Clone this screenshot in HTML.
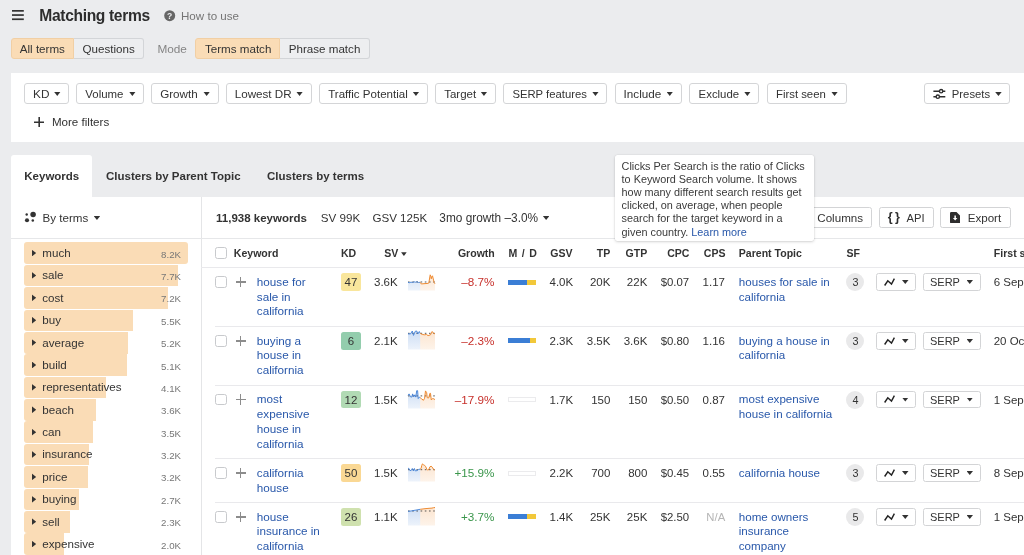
<!DOCTYPE html>
<html lang="en">
<head>
<meta charset="utf-8">
<title>Matching terms</title>
<style>
*{box-sizing:border-box;margin:0;padding:0}
html,body{width:1024px;height:555px;overflow:hidden}
body{background:#ebecee;font-family:"Liberation Sans",Arial,sans-serif;font-size:11.25px;color:#333;position:relative}
.a{position:absolute;white-space:nowrap}
.t{position:absolute;white-space:nowrap;line-height:14px;height:14px}
.b{font-weight:bold}
.tg{position:absolute;top:38.3px;height:21px;border:1px solid #d3d5d8;background:#edeef0}
.tg.on{background:#fadcb6;border-color:#f1cfa4}
.panel{position:absolute;background:#fff}
.fb{position:absolute;top:82.9px;height:21px;border:1px solid #d4d5d7;border-radius:3px;background:#fff}
.car{position:absolute;background:#333;clip-path:polygon(0 0,100% 0,50% 100%)}
.term{position:absolute;left:24px;height:21.6px;width:170px}
.term .bar{position:absolute;left:0;top:0;height:21.6px;background:#fadcb6;border-radius:3px 0 0 3px}
.term .tri{position:absolute;left:7.8px;top:7.3px;width:4.4px;height:6.8px;background:#333;clip-path:polygon(0 0,100% 50%,0 100%)}
.term .nm{position:absolute;left:18.3px;top:3.6px;line-height:14px;font-size:11.6px;color:#333}
.term .ct{position:absolute;right:13px;top:5.3px;line-height:14px;font-size:9.7px;color:#777}
.th{position:absolute;top:246px;font-weight:bold;font-size:10.5px;line-height:14px;color:#333;white-space:nowrap}
.lnk{color:#2958aa}
.kw{position:absolute;left:256.8px;line-height:14.87px;color:#2958aa;white-space:nowrap}
.cb{position:absolute;left:215.3px;width:11.5px;height:11.5px;border:1px solid #c8cacd;border-radius:2.5px;background:#fff}
.plus{position:absolute;width:10.4px;height:10.4px}
.plus:before{content:"";position:absolute;left:0;top:4.5px;width:10.4px;height:1.4px;background:#8c8c8c}
.plus:after{content:"";position:absolute;left:4.5px;top:0;width:1.4px;height:10.4px;background:#8c8c8c}
.kd{position:absolute;left:341px;width:19.8px;height:17.7px;line-height:19.3px;border-radius:2.5px;text-align:center;color:#333}
.sf{position:absolute;left:846.4px;width:18px;height:18px;line-height:18px;border-radius:9px;background:#e9e9ea;text-align:center;font-size:10.8px;color:#333}
.btn{position:absolute;border:1px solid #d3d4d6;border-radius:2.5px;background:#fff}
.rl{position:absolute;left:215.3px;width:810px;height:1px;background:#e9e9ec}
.red{color:#c7302b}.grn{color:#3a964b}
.md{position:absolute;left:508.2px;width:27.8px;height:5px}
</style>
</head>
<body>
<div id="app" style="position:absolute;left:0;top:0;width:1024px;height:555px;overflow:hidden;will-change:transform">
<svg class="a" style="left:12.1px;top:10.45px" width="12" height="11" viewBox="0 0 12 11"><rect x="0" y="0" width="11.8" height="1.7" fill="#333"/><rect x="0" y="4.2" width="11.8" height="1.7" fill="#333"/><rect x="0" y="8.4" width="11.8" height="1.7" fill="#333"/></svg>
<div class="t b" style="top:8.6px;font-size:15.6px;left:39.3px;color:#2d2d2d;letter-spacing:-0.34px;">Matching terms</div>
<svg class="a" style="left:163.8px;top:10.2px" width="12" height="12" viewBox="0 0 12 12"><circle cx="5.7" cy="5.7" r="5.5" fill="#666"/><text x="5.7" y="8.8" font-family="Liberation Sans, sans-serif" font-size="8.6" font-weight="bold" fill="#ebecee" text-anchor="middle">?</text></svg>
<div class="t " style="top:9.0px;font-size:11.6px;left:181.0px;color:#757575;">How to use</div>
<div class="tg on" style="left:11px;width:63px;border-radius:3px 0 0 3px"></div>
<div class="tg" style="left:73.5px;width:70.3px;border-radius:0 3px 3px 0;border-left:0"></div>
<div class="t " style="top:42.0px;font-size:11.6px;left:19.8px;">All terms</div>
<div class="t " style="top:42.0px;font-size:11.6px;left:82.5px;">Questions</div>
<div class="t " style="top:42.0px;font-size:11.8px;left:157.4px;color:#858585;">Mode</div>
<div class="tg on" style="left:195.4px;width:84.6px;border-radius:3px 0 0 3px"></div>
<div class="tg" style="left:279.8px;width:89.8px;border-radius:0 3px 3px 0;border-left:0"></div>
<div class="t " style="top:42.0px;font-size:11.6px;left:205.0px;">Terms match</div>
<div class="t " style="top:42.0px;font-size:11.6px;left:288.8px;">Phrase match</div>
<div class="panel" style="left:11px;top:72.5px;width:1013px;height:69.5px"></div>
<div class="fb" style="left:24.2px;width:45.1px"></div>
<div class="t " style="top:86.6px;font-size:11.8px;left:33.1px;">KD</div>
<i class="car" style="left:54.0px;top:91.8px;width:6.5px;height:4.1px"></i>
<div class="fb" style="left:76.2px;width:68.2px"></div>
<div class="t " style="top:86.6px;font-size:11.45px;left:85.3px;">Volume</div>
<i class="car" style="left:129.1px;top:91.8px;width:6.5px;height:4.1px"></i>
<div class="fb" style="left:151.1px;width:67.6px"></div>
<div class="t " style="top:86.6px;font-size:11.65px;left:160.2px;">Growth</div>
<i class="car" style="left:203.4px;top:91.8px;width:6.5px;height:4.1px"></i>
<div class="fb" style="left:226px;width:85.6px"></div>
<div class="t " style="top:86.6px;font-size:11.65px;left:234.7px;">Lowest DR</div>
<i class="car" style="left:296.3px;top:91.8px;width:6.5px;height:4.1px"></i>
<div class="fb" style="left:319px;width:109.0px"></div>
<div class="t " style="top:86.6px;font-size:11.55px;left:328.2px;">Traffic Potential</div>
<i class="car" style="left:412.7px;top:91.8px;width:6.5px;height:4.1px"></i>
<div class="fb" style="left:435.4px;width:60.6px"></div>
<div class="t " style="top:86.6px;font-size:11.5px;left:444.2px;">Target</div>
<i class="car" style="left:480.7px;top:91.8px;width:6.5px;height:4.1px"></i>
<div class="fb" style="left:503.1px;width:104.4px"></div>
<div class="t " style="top:86.6px;font-size:11.3px;left:512.4px;">SERP features</div>
<i class="car" style="left:592.2px;top:91.8px;width:6.5px;height:4.1px"></i>
<div class="fb" style="left:614.5px;width:67.3px"></div>
<div class="t " style="top:86.6px;font-size:11.7px;left:623.6px;">Include</div>
<i class="car" style="left:666.5px;top:91.8px;width:6.5px;height:4.1px"></i>
<div class="fb" style="left:688.8px;width:70.6px"></div>
<div class="t " style="top:86.6px;font-size:11.4px;left:698.6px;">Exclude</div>
<i class="car" style="left:744.1px;top:91.8px;width:6.5px;height:4.1px"></i>
<div class="fb" style="left:766.7px;width:79.9px"></div>
<div class="t " style="top:86.6px;font-size:11.35px;left:776.0px;">First seen</div>
<i class="car" style="left:831.3px;top:91.8px;width:6.5px;height:4.1px"></i>
<div class="fb" style="left:924.2px;width:86.2px"></div>
<svg class="a" style="left:932.5px;top:87.5px" width="13" height="12" viewBox="0 0 13 12" fill="none" stroke="#2e2e2e" stroke-width="1.5"><path d="M0.4 3.2h11.9M0.4 8.7h11.9"/><circle cx="8.1" cy="3.2" r="1.65" fill="#fff" stroke-width="1.4"/><circle cx="4.8" cy="8.7" r="1.65" fill="#fff" stroke-width="1.4"/></svg>
<div class="t " style="top:86.6px;font-size:11.3px;left:951.8px;">Presets</div>
<i class="car" style="left:995.2px;top:92.0px;width:6.5px;height:4.1px"></i>
<svg class="a" style="left:33.6px;top:116.7px" width="10.4" height="10.4" viewBox="0 0 10.4 10.4"><path d="M5.200 0v10.4M0 5.200h10.4" stroke="#333" stroke-width="1.6" fill="none"/></svg>
<div class="t " style="top:114.8px;font-size:11.6px;left:51.9px;">More filters</div>
<div class="panel" style="left:11px;top:155.3px;width:81px;height:44px;border-radius:3px 3px 0 0"></div>
<div class="t b" style="top:169.3px;font-size:11.5px;left:24.3px;">Keywords</div>
<div class="t b" style="top:169.3px;font-size:11.5px;left:106.0px;">Clusters by Parent Topic</div>
<div class="t b" style="top:169.3px;font-size:11.5px;left:267.0px;">Clusters by terms</div>
<div class="panel" style="left:11px;top:196.7px;width:1013px;height:360px"></div>
<div class="a" style="left:201px;top:196.7px;width:1px;height:360px;background:#e4e5e7"></div>
<div class="a" style="left:11px;top:238px;width:1013px;height:1px;background:#e6e7e9"></div>
<svg class="a" style="left:24px;top:211px" width="13" height="13" viewBox="0 0 13 13" fill="#333"><circle cx="2.700" cy="3.500" r="1.2"/><circle cx="3" cy="9.2" r="2.050"/><circle cx="9.100" cy="3.400" r="2.750"/><circle cx="8.8" cy="9.5" r="1.25"/></svg>
<div class="t " style="top:210.7px;font-size:11.6px;left:42.6px;">By terms</div>
<i class="car" style="left:93.7px;top:215.9px;width:6.5px;height:4.1px"></i>
<div class="t b" style="top:210.5px;font-size:11.5px;left:216.1px;">11,938 keywords</div>
<div class="t " style="top:210.5px;font-size:11.6px;left:320.8px;">SV 99K</div>
<div class="t " style="top:210.5px;font-size:11.6px;left:372.4px;">GSV 125K</div>
<div class="t " style="top:210.5px;font-size:11.85px;left:439.3px;">3mo growth –3.0%</div>
<i class="car" style="left:542.9px;top:215.9px;width:6.5px;height:4.1px"></i>
<div class="btn" style="left:800px;top:207.2px;width:72.3px;height:20.8px"></div>
<div class="t " style="top:210.6px;font-size:11.6px;left:817.3px;">Columns</div>
<div class="btn" style="left:879.2px;top:207.2px;width:54.6px;height:20.8px"></div>
<div class="t b" style="top:209.9px;font-size:12.6px;left:887.8px;color:#2d2d2d;letter-spacing:2.2px;">{}</div>
<div class="t " style="top:210.6px;font-size:11.2px;left:906.5px;">API</div>
<div class="btn" style="left:940.4px;top:207.2px;width:70.3px;height:20.8px"></div>
<svg class="a" style="left:950.2px;top:211.6px" width="10.3" height="11.4" viewBox="0 0 10.3 11.4"><path d="M1.300 0h5.200L10.300 3.800v6.300a1.300 1.300 0 0 1-1.300 1.300H1.300A1.300 1.300 0 0 1 0 10.100V1.300A1.300 1.300 0 0 1 1.300 0z" fill="#2d2d2d"/><path d="M4.400 3.600h1.500v2.400h1.500L5.150 8.600L2.900 6h1.500z" fill="#fff"/></svg>
<div class="t " style="top:210.6px;font-size:11.6px;left:967.7px;">Export</div>
<div class="term" style="top:242.40px"><div class="bar" style="width:164px;border-radius:3px"></div><i class="tri"></i><span class="nm">much</span><span class="ct">8.2K</span></div>
<div class="term" style="top:264.78px"><div class="bar" style="width:154px"></div><i class="tri"></i><span class="nm">sale</span><span class="ct">7.7K</span></div>
<div class="term" style="top:287.16px"><div class="bar" style="width:144px"></div><i class="tri"></i><span class="nm">cost</span><span class="ct">7.2K</span></div>
<div class="term" style="top:309.54px"><div class="bar" style="width:109px"></div><i class="tri"></i><span class="nm">buy</span><span class="ct">5.5K</span></div>
<div class="term" style="top:331.92px"><div class="bar" style="width:104px"></div><i class="tri"></i><span class="nm">average</span><span class="ct">5.2K</span></div>
<div class="term" style="top:354.30px"><div class="bar" style="width:102.5px"></div><i class="tri"></i><span class="nm">build</span><span class="ct">5.1K</span></div>
<div class="term" style="top:376.68px"><div class="bar" style="width:82px"></div><i class="tri"></i><span class="nm">representatives</span><span class="ct">4.1K</span></div>
<div class="term" style="top:399.06px"><div class="bar" style="width:72px"></div><i class="tri"></i><span class="nm">beach</span><span class="ct">3.6K</span></div>
<div class="term" style="top:421.44px"><div class="bar" style="width:69px"></div><i class="tri"></i><span class="nm">can</span><span class="ct">3.5K</span></div>
<div class="term" style="top:443.82px"><div class="bar" style="width:64.5px"></div><i class="tri"></i><span class="nm">insurance</span><span class="ct">3.2K</span></div>
<div class="term" style="top:466.20px"><div class="bar" style="width:63.5px"></div><i class="tri"></i><span class="nm">price</span><span class="ct">3.2K</span></div>
<div class="term" style="top:488.58px"><div class="bar" style="width:54.5px"></div><i class="tri"></i><span class="nm">buying</span><span class="ct">2.7K</span></div>
<div class="term" style="top:510.96px"><div class="bar" style="width:46px"></div><i class="tri"></i><span class="nm">sell</span><span class="ct">2.3K</span></div>
<div class="term" style="top:533.34px"><div class="bar" style="width:39.5px"></div><i class="tri"></i><span class="nm">expensive</span><span class="ct">2.0K</span></div>
<div class="cb" style="top:247.3px"></div>
<div class="t b" style="top:246.2px;font-size:10.55px;left:233.8px;">Keyword</div>
<div class="t b" style="top:246.2px;font-size:10.55px;left:341.0px;">KD</div>
<div class="t b" style="top:246.2px;font-size:10.55px;left:384.3px;">SV</div>
<i class="car" style="left:401.1px;top:252.3px;width:5.6px;height:3.8px"></i>
<div class="t b" style="top:246.2px;font-size:10.55px;right:529.2px;">Growth</div>
<div class="t b" style="top:246.2px;font-size:10.55px;left:508.5px;word-spacing:1.6px;">M / D</div>
<div class="t b" style="top:246.2px;font-size:10.55px;right:451.5px;">GSV</div>
<div class="t b" style="top:246.2px;font-size:10.55px;right:413.7px;">TP</div>
<div class="t b" style="top:246.2px;font-size:10.55px;right:376.8px;">GTP</div>
<div class="t b" style="top:246.2px;font-size:10.55px;right:334.6px;">CPC</div>
<div class="t b" style="top:246.2px;font-size:10.55px;right:298.5px;">CPS</div>
<div class="t b" style="top:246.2px;font-size:10.55px;left:738.8px;">Parent Topic</div>
<div class="t b" style="top:246.2px;font-size:10.55px;left:846.5px;">SF</div>
<div class="t b" style="top:246.2px;font-size:10.55px;left:993.8px;">First seen</div>
<div class="a" style="left:201px;top:267px;width:823px;height:1px;background:#e9e9ec"></div>
<div class="cb" style="top:276.3px"></div>
<div class="plus" style="left:235.6px;top:276.9px"></div>
<div class="kw" style="top:274.7px;font-size:11.7px">house for<br>sale in<br>california</div>
<div class="kd" style="top:273.3px;background:#f9e69c;font-size:11.5px">47</div>
<div class="t " style="top:275.1px;font-size:11.5px;left:374.0px;">3.6K</div>
<svg class="a" style="left:408px;top:273.0px;overflow:visible" width="27" height="17.4" viewBox="0 0 27 17.4"><defs><linearGradient id="gb0" x1="0" y1="0" x2="0" y2="17.4" gradientUnits="userSpaceOnUse"><stop offset="0" stop-color="#4a86d8" stop-opacity="0.27"/><stop offset="1" stop-color="#4a86d8" stop-opacity="0.1"/></linearGradient><linearGradient id="go0" x1="0" y1="0" x2="0" y2="17.4" gradientUnits="userSpaceOnUse"><stop offset="0" stop-color="#f08a2c" stop-opacity="0.22"/><stop offset="1" stop-color="#f08a2c" stop-opacity="0.1"/></linearGradient></defs><polygon points="0.0,9.4 1.5,9.7 3.0,9.1 4.5,9.5 6.0,8.8 7.5,9.2 9.0,8.7 10.5,9.5 12.2,9.3 12.2,17.4 0,17.4" fill="url(#gb0)"/><polygon points="12.2,9.3 13.2,10.9 15.0,10.8 17.0,10.6 19.0,10.5 20.8,10.1 21.5,6.0 22.2,1.8 22.8,3.0 23.3,5.8 23.9,3.6 24.5,2.8 25.3,6.0 26.2,9.6 27.0,10.8 27.0,17.4 12.2,17.4" fill="url(#go0)"/><line x1="0" y1="9.0" x2="27" y2="9.0" stroke="#444" stroke-width="0.9" stroke-dasharray="1.6 2.6"/><polyline points="0.0,9.4 1.5,9.7 3.0,9.1 4.5,9.5 6.0,8.8 7.5,9.2 9.0,8.7 10.5,9.5 12.2,9.3" fill="none" stroke="#3f7fd6" stroke-width="0.9"/><polyline points="12.2,9.3 13.2,10.9 15.0,10.8 17.0,10.6 19.0,10.5 20.8,10.1 21.5,6.0 22.2,1.8 22.8,3.0 23.3,5.8 23.9,3.6 24.5,2.8 25.3,6.0 26.2,9.6 27.0,10.8" fill="none" stroke="#ee8a30" stroke-width="1"/></svg>
<div class="t red" style="top:275.1px;font-size:11.7px;right:529.6px;">–8.7%</div>
<div class="md" style="top:279.5px"><i class="a" style="left:0;top:0;width:19px;height:5px;background:#3b7ed5"></i><i class="a" style="left:19px;top:0;width:8.8px;height:5px;background:#f2c83a"></i></div>
<div class="t " style="top:275.1px;font-size:11.5px;right:450.8px;">4.0K</div>
<div class="t " style="top:275.1px;font-size:11.5px;right:413.6px;">20K</div>
<div class="t " style="top:275.1px;font-size:11.5px;right:376.7px;">22K</div>
<div class="t " style="top:275.1px;font-size:11.4px;right:334.8px;">$0.07</div>
<div class="t " style="top:275.1px;font-size:11.5px;right:299.0px;">1.17</div>
<div class="kw" style="left:738.8px;top:274.7px;font-size:11.6px">houses for sale in<br>california</div>
<div class="sf" style="top:273.1px">3</div>
<div class="btn" style="left:876.1px;top:273.3px;width:39.7px;height:17.7px"></div>
<svg class="a" style="left:883.8px;top:277.9px" width="11" height="8" viewBox="0 0 11 8"><path d="M0.650 7.500L3.800 2.800L7.500 6L10.400 0.600" fill="none" stroke="#222" stroke-width="1.45" stroke-linejoin="miter"/></svg>
<i class="car" style="left:902.0px;top:280.0px;width:6.5px;height:4.1px"></i>
<div class="btn" style="left:922.5px;top:273.3px;width:58.1px;height:17.7px"></div>
<div class="t " style="top:275.1px;font-size:11px;left:930.0px;">SERP</div>
<i class="car" style="left:966.5px;top:280.0px;width:6.5px;height:4.1px"></i>
<div class="t " style="top:275.1px;font-size:11.5px;left:993.7px;">6 Sep 2015</div>
<div class="rl" style="top:325.9px"></div>
<div class="cb" style="top:335.2px"></div>
<div class="plus" style="left:235.6px;top:335.8px"></div>
<div class="kw" style="top:333.6px;font-size:11.7px">buying a<br>house in<br>california</div>
<div class="kd" style="top:332.2px;background:#93cdad;font-size:11.5px">6</div>
<div class="t " style="top:334.0px;font-size:11.5px;left:374.0px;">2.1K</div>
<svg class="a" style="left:408px;top:331.9px;overflow:visible" width="27" height="17.4" viewBox="0 0 27 17.4"><defs><linearGradient id="gb1" x1="0" y1="0" x2="0" y2="17.4" gradientUnits="userSpaceOnUse"><stop offset="0" stop-color="#4a86d8" stop-opacity="0.27"/><stop offset="1" stop-color="#4a86d8" stop-opacity="0.1"/></linearGradient><linearGradient id="go1" x1="0" y1="0" x2="0" y2="17.4" gradientUnits="userSpaceOnUse"><stop offset="0" stop-color="#f08a2c" stop-opacity="0.22"/><stop offset="1" stop-color="#f08a2c" stop-opacity="0.1"/></linearGradient></defs><polygon points="0.0,1.9 2.5,1.9 4.3,-1.0 5.5,3.4 7.2,-0.7 8.7,-1.0 9.9,1.9 11.3,-0.5 12.2,1.3 12.2,17.4 0,17.4" fill="url(#gb1)"/><polygon points="12.2,1.3 14.3,2.5 16.6,2.8 18.4,2.5 20.1,3.6 22.5,2.8 24.2,-0.5 25.7,1.3 27.0,1.9 27.0,17.4 12.2,17.4" fill="url(#go1)"/><line x1="0" y1="1.3" x2="27" y2="1.3" stroke="#444" stroke-width="0.9" stroke-dasharray="1.6 2.6"/><polyline points="0.0,1.9 2.5,1.9 4.3,-1.0 5.5,3.4 7.2,-0.7 8.7,-1.0 9.9,1.9 11.3,-0.5 12.2,1.3" fill="none" stroke="#3f7fd6" stroke-width="0.9"/><polyline points="12.2,1.3 14.3,2.5 16.6,2.8 18.4,2.5 20.1,3.6 22.5,2.8 24.2,-0.5 25.7,1.3 27.0,1.9" fill="none" stroke="#ee8a30" stroke-width="1"/></svg>
<div class="t red" style="top:334.0px;font-size:11.7px;right:529.6px;">–2.3%</div>
<div class="md" style="top:338.4px"><i class="a" style="left:0;top:0;width:22px;height:5px;background:#3b7ed5"></i><i class="a" style="left:22px;top:0;width:5.8px;height:5px;background:#f2c83a"></i></div>
<div class="t " style="top:334.0px;font-size:11.5px;right:450.8px;">2.3K</div>
<div class="t " style="top:334.0px;font-size:11.5px;right:413.6px;">3.5K</div>
<div class="t " style="top:334.0px;font-size:11.5px;right:376.7px;">3.6K</div>
<div class="t " style="top:334.0px;font-size:11.4px;right:334.8px;">$0.80</div>
<div class="t " style="top:334.0px;font-size:11.5px;right:299.0px;">1.16</div>
<div class="kw" style="left:738.8px;top:333.6px;font-size:11.6px">buying a house in<br>california</div>
<div class="sf" style="top:332.0px">3</div>
<div class="btn" style="left:876.1px;top:332.2px;width:39.7px;height:17.7px"></div>
<svg class="a" style="left:883.8px;top:336.8px" width="11" height="8" viewBox="0 0 11 8"><path d="M0.650 7.500L3.800 2.800L7.500 6L10.400 0.600" fill="none" stroke="#222" stroke-width="1.45" stroke-linejoin="miter"/></svg>
<i class="car" style="left:902.0px;top:338.9px;width:6.5px;height:4.1px"></i>
<div class="btn" style="left:922.5px;top:332.2px;width:58.1px;height:17.7px"></div>
<div class="t " style="top:334.0px;font-size:11px;left:930.0px;">SERP</div>
<i class="car" style="left:966.5px;top:338.9px;width:6.5px;height:4.1px"></i>
<div class="t " style="top:334.0px;font-size:11.5px;left:993.7px;">20 Oct 2015</div>
<div class="rl" style="top:384.5px"></div>
<div class="cb" style="top:393.8px"></div>
<div class="plus" style="left:235.6px;top:394.4px"></div>
<div class="kw" style="top:392.2px;font-size:11.7px">most<br>expensive<br>house in<br>california</div>
<div class="kd" style="top:390.8px;background:#b1dab4;font-size:11.5px">12</div>
<div class="t " style="top:392.6px;font-size:11.5px;left:374.0px;">1.5K</div>
<svg class="a" style="left:408px;top:390.5px;overflow:visible" width="27" height="17.4" viewBox="0 0 27 17.4"><defs><linearGradient id="gb2" x1="0" y1="0" x2="0" y2="17.4" gradientUnits="userSpaceOnUse"><stop offset="0" stop-color="#4a86d8" stop-opacity="0.27"/><stop offset="1" stop-color="#4a86d8" stop-opacity="0.1"/></linearGradient><linearGradient id="go2" x1="0" y1="0" x2="0" y2="17.4" gradientUnits="userSpaceOnUse"><stop offset="0" stop-color="#f08a2c" stop-opacity="0.22"/><stop offset="1" stop-color="#f08a2c" stop-opacity="0.1"/></linearGradient></defs><polygon points="0.0,4.3 1.1,2.9 2.5,5.8 3.7,6.1 4.6,2.9 5.8,5.8 6.9,3.8 7.8,6.1 8.7,-0.3 9.6,-0.3 10.2,7.6 11.3,6.1 12.2,6.7 12.2,17.4 0,17.4" fill="url(#gb2)"/><polygon points="12.2,6.7 13.7,7.9 15.4,9.3 16.6,7.3 17.5,-0.1 18.7,1.7 19.2,6.7 20.7,7.0 21.9,2.3 22.5,2.3 23.3,9.0 24.5,7.6 26.0,7.9 27.0,8.7 27.0,17.4 12.2,17.4" fill="url(#go2)"/><line x1="0" y1="4.9" x2="27" y2="4.9" stroke="#444" stroke-width="0.9" stroke-dasharray="1.6 2.6"/><polyline points="0.0,4.3 1.1,2.9 2.5,5.8 3.7,6.1 4.6,2.9 5.8,5.8 6.9,3.8 7.8,6.1 8.7,-0.3 9.6,-0.3 10.2,7.6 11.3,6.1 12.2,6.7" fill="none" stroke="#3f7fd6" stroke-width="0.9"/><polyline points="12.2,6.7 13.7,7.9 15.4,9.3 16.6,7.3 17.5,-0.1 18.7,1.7 19.2,6.7 20.7,7.0 21.9,2.3 22.5,2.3 23.3,9.0 24.5,7.6 26.0,7.9 27.0,8.7" fill="none" stroke="#ee8a30" stroke-width="1"/></svg>
<div class="t red" style="top:392.6px;font-size:11.7px;right:529.6px;">–17.9%</div>
<div class="md" style="top:397.0px;border:1px solid #ebebed;background:#fff"></div>
<div class="t " style="top:392.6px;font-size:11.5px;right:450.8px;">1.7K</div>
<div class="t " style="top:392.6px;font-size:11.5px;right:413.6px;">150</div>
<div class="t " style="top:392.6px;font-size:11.5px;right:376.7px;">150</div>
<div class="t " style="top:392.6px;font-size:11.4px;right:334.8px;">$0.50</div>
<div class="t " style="top:392.6px;font-size:11.5px;right:299.0px;">0.87</div>
<div class="kw" style="left:738.8px;top:392.2px;font-size:11.6px">most expensive<br>house in california</div>
<div class="sf" style="top:390.6px">4</div>
<div class="btn" style="left:876.1px;top:390.8px;width:39.7px;height:17.7px"></div>
<svg class="a" style="left:883.8px;top:395.4px" width="11" height="8" viewBox="0 0 11 8"><path d="M0.650 7.500L3.800 2.800L7.500 6L10.400 0.600" fill="none" stroke="#222" stroke-width="1.45" stroke-linejoin="miter"/></svg>
<i class="car" style="left:902.0px;top:397.5px;width:6.5px;height:4.1px"></i>
<div class="btn" style="left:922.5px;top:390.8px;width:58.1px;height:17.7px"></div>
<div class="t " style="top:392.6px;font-size:11px;left:930.0px;">SERP</div>
<i class="car" style="left:966.5px;top:397.5px;width:6.5px;height:4.1px"></i>
<div class="t " style="top:392.6px;font-size:11.5px;left:993.7px;">1 Sep 2015</div>
<div class="rl" style="top:458.0px"></div>
<div class="cb" style="top:467.3px"></div>
<div class="plus" style="left:235.6px;top:467.9px"></div>
<div class="kw" style="top:465.7px;font-size:11.7px">california<br>house</div>
<div class="kd" style="top:464.3px;background:#fad894;font-size:11.5px">50</div>
<div class="t " style="top:466.1px;font-size:11.5px;left:374.0px;">1.5K</div>
<svg class="a" style="left:408px;top:464.0px;overflow:visible" width="27" height="17.4" viewBox="0 0 27 17.4"><defs><linearGradient id="gb3" x1="0" y1="0" x2="0" y2="17.4" gradientUnits="userSpaceOnUse"><stop offset="0" stop-color="#4a86d8" stop-opacity="0.27"/><stop offset="1" stop-color="#4a86d8" stop-opacity="0.1"/></linearGradient><linearGradient id="go3" x1="0" y1="0" x2="0" y2="17.4" gradientUnits="userSpaceOnUse"><stop offset="0" stop-color="#f08a2c" stop-opacity="0.22"/><stop offset="1" stop-color="#f08a2c" stop-opacity="0.1"/></linearGradient></defs><polygon points="0.0,4.5 0.8,4.3 1.7,6.3 3.1,6.6 4.3,4.5 5.5,6.9 6.4,4.5 7.3,6.9 9.0,6.6 10.7,5.4 12.2,5.1 12.2,17.4 0,17.4" fill="url(#gb3)"/><polygon points="12.2,5.1 13.1,4.5 13.7,1.6 14.4,-0.1 15.4,0.7 16.6,1.3 17.8,2.8 18.7,5.1 19.8,6.3 21.0,5.1 21.9,2.8 23.1,2.2 24.2,3.1 25.4,5.1 26.3,5.7 27.0,6.0 27.0,17.4 12.2,17.4" fill="url(#go3)"/><line x1="0" y1="5.7" x2="27" y2="5.7" stroke="#444" stroke-width="0.9" stroke-dasharray="1.6 2.6"/><polyline points="0.0,4.5 0.8,4.3 1.7,6.3 3.1,6.6 4.3,4.5 5.5,6.9 6.4,4.5 7.3,6.9 9.0,6.6 10.7,5.4 12.2,5.1" fill="none" stroke="#3f7fd6" stroke-width="0.9"/><polyline points="12.2,5.1 13.1,4.5 13.7,1.6 14.4,-0.1 15.4,0.7 16.6,1.3 17.8,2.8 18.7,5.1 19.8,6.3 21.0,5.1 21.9,2.8 23.1,2.2 24.2,3.1 25.4,5.1 26.3,5.7 27.0,6.0" fill="none" stroke="#ee8a30" stroke-width="1"/></svg>
<div class="t grn" style="top:466.1px;font-size:11.7px;right:529.6px;">+15.9%</div>
<div class="md" style="top:470.5px;border:1px solid #ebebed;background:#fff"></div>
<div class="t " style="top:466.1px;font-size:11.5px;right:450.8px;">2.2K</div>
<div class="t " style="top:466.1px;font-size:11.5px;right:413.6px;">700</div>
<div class="t " style="top:466.1px;font-size:11.5px;right:376.7px;">800</div>
<div class="t " style="top:466.1px;font-size:11.4px;right:334.8px;">$0.45</div>
<div class="t " style="top:466.1px;font-size:11.5px;right:299.0px;">0.55</div>
<div class="kw" style="left:738.8px;top:465.7px;font-size:11.6px">california house</div>
<div class="sf" style="top:464.1px">3</div>
<div class="btn" style="left:876.1px;top:464.3px;width:39.7px;height:17.7px"></div>
<svg class="a" style="left:883.8px;top:468.9px" width="11" height="8" viewBox="0 0 11 8"><path d="M0.650 7.500L3.800 2.800L7.500 6L10.400 0.600" fill="none" stroke="#222" stroke-width="1.45" stroke-linejoin="miter"/></svg>
<i class="car" style="left:902.0px;top:471.0px;width:6.5px;height:4.1px"></i>
<div class="btn" style="left:922.5px;top:464.3px;width:58.1px;height:17.7px"></div>
<div class="t " style="top:466.1px;font-size:11px;left:930.0px;">SERP</div>
<i class="car" style="left:966.5px;top:471.0px;width:6.5px;height:4.1px"></i>
<div class="t " style="top:466.1px;font-size:11.5px;left:993.7px;">8 Sep 2015</div>
<div class="rl" style="top:501.9px"></div>
<div class="cb" style="top:511.2px"></div>
<div class="plus" style="left:235.6px;top:511.8px"></div>
<div class="kw" style="top:509.6px;font-size:11.7px">house<br>insurance in<br>california</div>
<div class="kd" style="top:508.2px;background:#cfe1ae;font-size:11.5px">26</div>
<div class="t " style="top:510.0px;font-size:11.5px;left:374.0px;">1.1K</div>
<svg class="a" style="left:408px;top:507.9px;overflow:visible" width="27" height="17.4" viewBox="0 0 27 17.4"><defs><linearGradient id="gb4" x1="0" y1="0" x2="0" y2="17.4" gradientUnits="userSpaceOnUse"><stop offset="0" stop-color="#4a86d8" stop-opacity="0.27"/><stop offset="1" stop-color="#4a86d8" stop-opacity="0.1"/></linearGradient><linearGradient id="go4" x1="0" y1="0" x2="0" y2="17.4" gradientUnits="userSpaceOnUse"><stop offset="0" stop-color="#f08a2c" stop-opacity="0.22"/><stop offset="1" stop-color="#f08a2c" stop-opacity="0.1"/></linearGradient></defs><polygon points="0.0,3.3 3.0,3.0 6.0,2.4 9.0,1.9 12.2,1.3 12.2,17.4 0,17.4" fill="url(#gb4)"/><polygon points="12.2,1.3 16.0,0.8 20.0,0.4 24.0,0.1 25.5,-0.3 27.0,-0.5 27.0,17.4 12.2,17.4" fill="url(#go4)"/><line x1="0" y1="3.0" x2="27" y2="3.0" stroke="#444" stroke-width="0.9" stroke-dasharray="1.6 2.6"/><polyline points="0.0,3.3 3.0,3.0 6.0,2.4 9.0,1.9 12.2,1.3" fill="none" stroke="#3f7fd6" stroke-width="0.9"/><polyline points="12.2,1.3 16.0,0.8 20.0,0.4 24.0,0.1 25.5,-0.3 27.0,-0.5" fill="none" stroke="#ee8a30" stroke-width="1"/></svg>
<div class="t grn" style="top:510.0px;font-size:11.7px;right:529.6px;">+3.7%</div>
<div class="md" style="top:514.4px"><i class="a" style="left:0;top:0;width:18.5px;height:5px;background:#3b7ed5"></i><i class="a" style="left:18.5px;top:0;width:9.3px;height:5px;background:#f2c83a"></i></div>
<div class="t " style="top:510.0px;font-size:11.5px;right:450.8px;">1.4K</div>
<div class="t " style="top:510.0px;font-size:11.5px;right:413.6px;">25K</div>
<div class="t " style="top:510.0px;font-size:11.5px;right:376.7px;">25K</div>
<div class="t " style="top:510.0px;font-size:11.4px;right:334.8px;">$2.50</div>
<div class="t " style="top:510.0px;font-size:11.3px;right:298.8px;color:#b5b5b5;">N/A</div>
<div class="kw" style="left:738.8px;top:509.6px;font-size:11.6px">home owners<br>insurance<br>company</div>
<div class="sf" style="top:508.0px">5</div>
<div class="btn" style="left:876.1px;top:508.2px;width:39.7px;height:17.7px"></div>
<svg class="a" style="left:883.8px;top:512.8px" width="11" height="8" viewBox="0 0 11 8"><path d="M0.650 7.500L3.800 2.800L7.500 6L10.400 0.600" fill="none" stroke="#222" stroke-width="1.45" stroke-linejoin="miter"/></svg>
<i class="car" style="left:902.0px;top:515.0px;width:6.5px;height:4.1px"></i>
<div class="btn" style="left:922.5px;top:508.2px;width:58.1px;height:17.7px"></div>
<div class="t " style="top:510.0px;font-size:11px;left:930.0px;">SERP</div>
<i class="car" style="left:966.5px;top:515.0px;width:6.5px;height:4.1px"></i>
<div class="t " style="top:510.0px;font-size:11.5px;left:993.7px;">1 Sep 2015</div>
<div class="a" style="left:614.6px;top:155.1px;width:199.6px;height:86.2px;background:#fff;border-radius:2.5px;box-shadow:0 1px 3px rgba(0,0,0,0.16),0 0 0 0.5px rgba(0,0,0,0.05)"></div>
<div class="t " style="top:158.5px;font-size:10.85px;left:621.6px;color:#3a3a3a;">Clicks Per Search is the ratio of Clicks</div>
<div class="t " style="top:171.7px;font-size:10.85px;left:621.6px;color:#3a3a3a;">to Keyword Search volume. It shows</div>
<div class="t " style="top:184.9px;font-size:10.85px;left:621.6px;color:#3a3a3a;">how many different search results get</div>
<div class="t " style="top:198.1px;font-size:10.85px;left:621.6px;color:#3a3a3a;">clicked, on average, when people</div>
<div class="t " style="top:211.3px;font-size:10.85px;left:621.6px;color:#3a3a3a;">search for the target keyword in a</div>
<div class="t " style="top:224.5px;font-size:10.85px;left:621.6px;color:#3a3a3a;">given country. <span class="lnk">Learn more</span></div>
</div>
</body>
</html>
